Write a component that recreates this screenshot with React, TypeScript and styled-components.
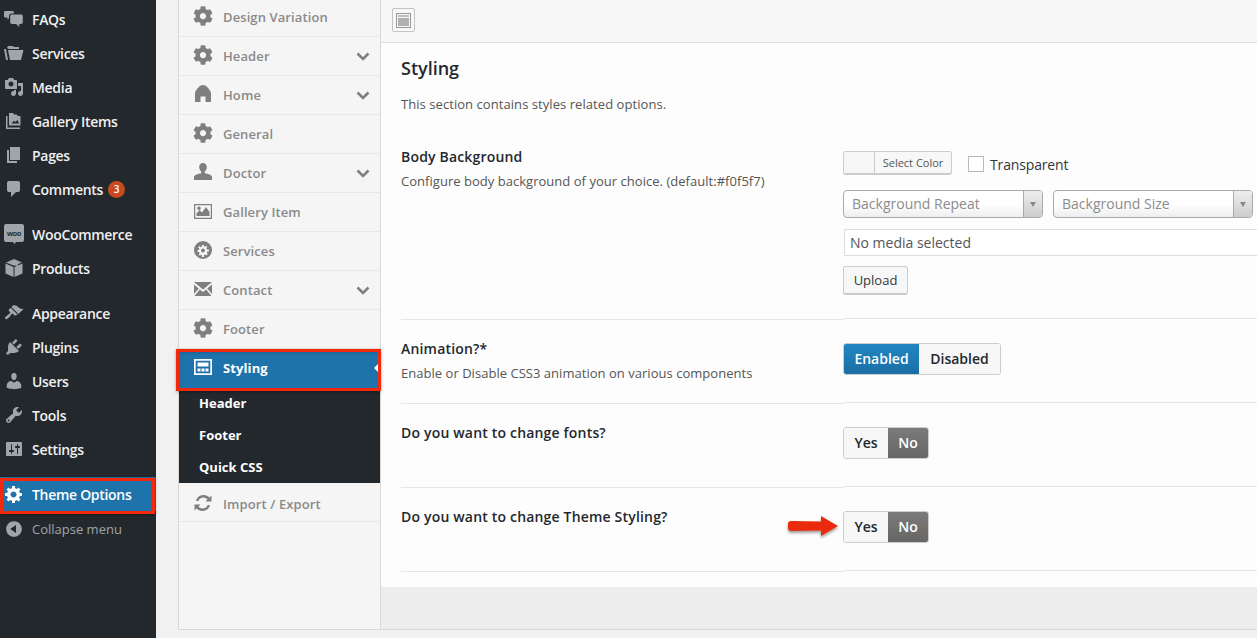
import * as React from 'react';
import styled, { createGlobalStyle } from 'styled-components';
import { FaCog } from 'react-icons/fa';

const GlobalStyle = createGlobalStyle`
    html, body {
        margin: 0;
        padding: 0;
        height: 638px;
        overflow: hidden;
        background: #f1f1f1;
        font-family: "Open Sans", "Liberation Sans", sans-serif;
    }
    * {
        box-sizing: border-box;
    }
`;

const Page = styled.div`
    display: flex;
    width: 1257px;
    height: 638px;
    overflow: hidden;
`;

/* ---- wordpress admin menu ---- */

const AdminMenu = styled.nav`
    width: 156px;
    flex: none;
    height: 638px;
    padding-top: 2px;
    background: #23282d;
`;

const MenuGroup = styled.div`
    margin-bottom: 11px;
`;

const MenuItem = styled.div<{ $active?: boolean }>`
    position: relative;
    display: flex;
    align-items: center;
    height: 34px;
    padding-left: 4px;
    gap: 8px;
    color: ${p => (p.$active ? '#fff' : '#f0f0f0')};
    background: ${p => (p.$active ? '#1e73aa' : 'transparent')};
    font-size: 14px;
    font-weight: 600;
    letter-spacing: -0.3px;

    svg {
        flex: none;
        width: 20px;
        height: 20px;
        fill: ${p => (p.$active ? '#fff' : '#a0a5aa')};
    }
`;

const Collapse = styled(MenuItem)`
    padding-top: 2px;
    color: #a0a5aa;
    font-size: 13px;
    font-weight: 400;
    letter-spacing: 0;
`;

const RedFrame = styled.span`
    position: absolute;
    border: 3px solid #f2290b;
    pointer-events: none;
    box-shadow: 0 1px 3px rgba(0, 0, 0, 0.35);
`;

const MenuFrame = styled(RedFrame)`
    left: 0;
    top: 1px;
    width: 155px;
    height: 36px;
`;

const Badge = styled.span`
    display: inline-flex;
    align-items: center;
    justify-content: center;
    width: 17px;
    height: 17px;
    margin-left: -3px;
    border-radius: 50%;
    background: #ca4a1f;
    color: #fff;
    font-size: 10px;
    font-weight: 600;
    letter-spacing: 0;
`;

/* ---- options panel ---- */

const Workspace = styled.div`
    flex: 1;
    min-width: 0;
    padding: 0 0 8px 22px;
`;

const Panel = styled.div`
    display: flex;
    height: 630px;
    border-left: 1px solid #d8d8d8;
    border-bottom: 1px solid #d8d8d8;
`;

const TabColumn = styled.div`
    width: 202px;
    flex: none;
    margin-top: -2px;
    background: #f5f5f5;
    border-right: 1px solid #d8d8d8;
`;

const Tab = styled.div<{ $active?: boolean }>`
    position: relative;
    display: flex;
    align-items: center;
    height: 39px;
    padding: ${p => (p.$active ? '0 0 2px 14px' : '0 0 0 14px')};
    gap: 10px;
    border-bottom: ${p => (p.$active ? 'none' : '1px solid #e8e8e8')};
    color: ${p => (p.$active ? '#fff' : '#8a8a8a')};
    background: ${p => (p.$active ? '#1e73aa' : 'transparent')};
    box-shadow: ${p => (p.$active ? 'inset 0 5px 4px -2px rgba(0, 0, 0, 0.22)' : 'none')};
    font-size: 13px;
    font-weight: ${p => (p.$active ? 700 : 600)};
    letter-spacing: 0.1px;

    & > svg:first-child {
        flex: none;
        width: 20px;
        height: 20px;
        margin-top: -2px;
        fill: ${p => (p.$active ? '#fff' : '#7f7f7f')};
    }
`;

const ImportTab = styled(Tab)`
    padding-top: 4px;
`;

const Chevron = styled.svg`
    position: absolute;
    right: 10px;
    top: 15px;
    width: 14px;
    height: 9px;
    fill: none;
    stroke: #7f7f7f;
    stroke-width: 2.6;
`;

const TabPointer = styled.span`
    position: absolute;
    right: 0;
    top: 13px;
    border-style: solid;
    border-width: 6px 6px 6px 0;
    border-color: transparent #fff transparent transparent;
`;

const TabFrame = styled(RedFrame)`
    left: -3px;
    top: 0;
    width: 205px;
    height: 42px;
`;

const SubTabs = styled.div`
    height: 95px;
    background: #23282d;
`;

const SubTab = styled.div`
    display: flex;
    align-items: center;
    height: 32px;
    padding: 0 0 2px 20px;
    color: #fff;
    font-size: 13px;
    font-weight: 700;
`;

const Content = styled.div`
    flex: 1;
    min-width: 0;
    display: flex;
    flex-direction: column;
`;

const TopBar = styled.div`
    display: flex;
    align-items: center;
    height: 43px;
    padding: 0 0 2px 11px;
    background: #f7f7f7;
    border-bottom: 1px solid #dedede;
`;

const LayoutButton = styled.div`
    display: flex;
    align-items: center;
    justify-content: center;
    width: 23px;
    height: 24px;
    background: #f8f8f8;
    border: 1px solid #c4c4c4;
    border-radius: 2px;

    svg {
        width: 15px;
        height: 15px;
    }
`;

const Sheet = styled.div`
    height: 544px;
    padding: 0 0 0 20px;
    background: #fdfdfd;
`;

const SectionTitle = styled.h2`
    margin: 0;
    padding-top: 14px;
    color: #23282d;
    font-size: 18px;
    line-height: 23px;
    font-weight: 600;
`;

const SectionText = styled.p`
    margin: 15px 0 0;
    color: #555;
    font-size: 13px;
    line-height: 18px;
    letter-spacing: 0.06px;
`;

const OptionRow = styled.div<{ $height: number }>`
    display: flex;
    height: ${p => p.$height}px;
`;

const OptionInfo = styled.div<{ $top: number }>`
    width: 442px;
    flex: none;
    padding-top: ${p => p.$top}px;
    border-bottom: 1px solid #e5e5e5;
`;

const OptionControl = styled.div<{ $top: number }>`
    position: relative;
    flex: 1;
    min-width: 0;
    padding-top: ${p => p.$top}px;
    margin-bottom: 1px;
    border-bottom: 1px solid #e5e5e5;
`;

const OptionLabel = styled.div`
    color: #23282d;
    font-size: 14px;
    line-height: 18px;
    font-weight: 600;
    letter-spacing: 0.18px;
`;

const OptionHint = styled.div`
    margin-top: 6px;
    color: #555;
    font-size: 13px;
    line-height: 18px;
    letter-spacing: 0.03px;
`;

const ControlLine = styled.div`
    display: flex;
    align-items: center;
`;

const ColorButton = styled.div`
    display: flex;
    width: 109px;
    height: 24px;
    border: 1px solid #ccc;
    border-bottom-width: 2px;
    border-radius: 3px;
    background: #f7f7f7;
    overflow: hidden;
`;

const Swatch = styled.span`
    width: 31px;
    background: #f6f6f6;
    border-right: 1px solid #ccc;
`;

const ColorCaption = styled.span`
    flex: 1;
    color: #555;
    font-size: 11px;
    line-height: 21px;
    text-align: center;
`;

const Checkbox = styled.span`
    width: 16px;
    height: 16px;
    margin-left: 16px;
    margin-top: 2px;
    border: 1px solid #b4b9be;
    background: #fff;
`;

const CheckText = styled.span`
    margin-left: 6px;
    margin-top: 3px;
    color: #32373c;
    font-size: 14px;
    letter-spacing: -0.15px;
`;

const SelectLine = styled(ControlLine)`
    gap: 10px;
    margin-top: 15px;
`;

const SelectBox = styled.div`
    display: flex;
    width: 200px;
    height: 28px;
    border: 1px solid #aaa;
    border-radius: 4px;
    background: linear-gradient(#fff 50%, #eee);
    overflow: hidden;
`;

const SelectText = styled.span`
    flex: 1;
    padding-left: 8px;
    color: #8c8c8c;
    font-size: 14px;
    line-height: 26px;
`;

const SelectArrow = styled.span`
    display: flex;
    align-items: center;
    justify-content: center;
    width: 19px;
    border-left: 1px solid #aaa;
    background: linear-gradient(#eee, #ccc);

    &::after {
        content: '';
        border-style: solid;
        border-width: 5px 3px 0;
        border-color: #888 transparent transparent;
    }
`;

const MediaInput = styled.div`
    width: 420px;
    height: 27px;
    margin: 11px 0 0 1px;
    padding-left: 5px;
    border: 1px solid #ddd;
    background: #fff;
    color: #555;
    font-size: 14px;
    line-height: 25px;
`;

const UploadButton = styled.div`
    width: 65px;
    height: 29px;
    margin-top: 10px;
    border: 1px solid #ccc;
    border-bottom-width: 2px;
    border-radius: 3px;
    background: #f7f7f7;
    color: #32373c;
    font-size: 13px;
    line-height: 26px;
    text-align: center;
`;

const SwitchGroup = styled.div`
    display: inline-flex;
    height: 32px;
    border: 1px solid #ccc;
    border-radius: 3px;
    overflow: hidden;
    vertical-align: top;
`;

const SwitchOption = styled.span<{ $width: number; $tone?: 'blue' | 'grey' }>`
    width: ${p => p.$width}px;
    color: ${p => (p.$tone ? '#fff' : '#23282d')};
    background: ${p =>
        p.$tone === 'blue'
            ? 'linear-gradient(#2186c2, #1b6ea6)'
            : p.$tone === 'grey'
            ? 'linear-gradient(#7b7b7b, #666)'
            : '#f7f7f7'};
    font-size: 14px;
    font-weight: 600;
    line-height: 30px;
    text-align: center;
`;

const Arrow = styled.svg`
    position: absolute;
    left: -57px;
    top: 27px;
    width: 54px;
    height: 28px;
    overflow: visible;
`;

const BottomBar = styled.div`
    flex: 1;
    background: #ededed;
`;

/* ---- icon drawings ---- */

const Dash = ({ d }: { d: string }) => (
    <svg viewBox="0 0 20 20">
        <path d={d} />
    </svg>
);

const COMMENT = 'M5 2h9q.82 0 1.41.59T16 4v7q0 .82-.59 1.41T14 13h-2l-5 5v-5H5q-.82 0-1.41-.59T3 11V4q0-.82.59-1.41T5 2z';
const MEDIA = 'M13 11V4c0-.55-.45-1-1-1h-1.67L9 1H5L3.67 3H2c-.55 0-1 .45-1 1v7c0 .55.45 1 1 1h10c.55 0 1-.45 1-1zM7 4.5c1.38 0 2.5 1.12 2.5 2.5S8.38 9.5 7 9.5 4.5 8.38 4.5 7 5.62 4.5 7 4.5zM14 6h5v10.5c0 1.38-1.12 2.5-2.5 2.5S14 17.88 14 16.5s1.12-2.5 2.5-2.5c.17 0 .34.02.5.05V9h-3V6zm-4 8.05V13h2v3.5c0 1.38-1.12 2.5-2.5 2.5S7 17.88 7 16.5 8.12 14 9.5 14c.17 0 .34.02.5.05z';
const PAGES = 'M6 15V2h10v13H6zm-1 1h8v2H3V5h2v11z';
const APPEARANCE = 'M14.48 11.06L7.41 3.99l1.5-1.5c.5-.56 2.3-.47 3.51.32 1.21.8 1.43 1.28 2.91 2.1 1.18.64 2.45 1.26 4.45.85zm-.71.71L6.7 4.7 4.93 6.47c-.39.39-.39 1.02 0 1.41l1.06 1.06c.39.39.39 1.03 0 1.42-.6.6-1.43 1.11-2.21 1.69-.35.26-.7.53-1.01.84C1.43 13.23.4 14.89 1.3 15.79c.91.9 2.57-.13 3.91-1.47.31-.31.58-.66.85-1.01.57-.78 1.08-1.61 1.69-2.21.39-.39 1.02-.39 1.41 0l1.06 1.06c.39.39 1.02.39 1.41 0z';
const PLUGINS = 'M13.11 4.36L9.87 7.6 8 5.73l3.24-3.24c.35-.34 1.05-.2 1.56.32.52.51.66 1.21.31 1.55zm-8 1.77l.91-1.12 9.01 9.01-1.19.84c-.71.71-2.63 1.16-3.82 1.16H6.14L4.9 17.26c-.59.59-1.54.59-2.12 0-.59-.58-.59-1.53 0-2.12l1.24-1.24v-3.88c0-1.13.4-3.19 1.09-3.89zm7.26 3.97l3.24-3.24c.34-.35 1.04-.21 1.55.31.52.51.66 1.21.31 1.55l-3.24 3.25z';
const USERS = 'M10 9.25c-2.27 0-2.73-3.44-2.73-3.44C7 4.02 7.82 2 9.97 2c2.16 0 2.98 2.02 2.71 3.81 0 0-.41 3.44-2.68 3.44zm0 2.57L12.72 10c2.39 0 4.52 2.33 4.52 4.53v2.49s-3.65 1.13-7.24 1.13c-3.65 0-7.24-1.13-7.24-1.13v-2.49c0-2.25 1.94-4.48 4.47-4.48z';
const TOOLS = 'M16.68 9.77c-1.34 1.34-3.3 1.67-4.95.99l-5.41 6.52c-.99.99-2.59.99-3.58 0s-.99-2.59 0-3.57l6.52-5.42c-.68-1.65-.35-3.61.99-4.95 1.28-1.28 3.12-1.62 4.72-1.06l-2.89 2.89 2.82 2.82 2.86-2.87c.53 1.58.18 3.39-1.08 4.65zM3.81 16.21c.4.39 1.04.39 1.43 0 .4-.4.4-1.04 0-1.43-.39-.4-1.03-.4-1.43 0-.39.39-.39 1.03 0 1.43z';
const SETTINGS = 'M18 16V4c0-.55-.45-1-1-1H3c-.55 0-1 .45-1 1v12c0 .55.45 1 1 1h14c.55 0 1-.45 1-1zM8 11h1c.55 0 1 .45 1 1s-.45 1-1 1H8v1.5c0 .28-.22.5-.5.5s-.5-.22-.5-.5V13H6c-.55 0-1-.45-1-1s.45-1 1-1h1V5.5c0-.28.22-.5.5-.5s.5.22.5.5V11zm5-2h-1c-.55 0-1-.45-1-1s.45-1 1-1h1V5.5c0-.28.22-.5.5-.5s.5.22.5.5V7h1c.55 0 1 .45 1 1s-.45 1-1 1h-1v5.5c0 .28-.22.5-.5.5s-.5-.22-.5-.5V9z';
const GENERIC = 'M18 12h-2.18c-.17.7-.44 1.35-.81 1.93l1.54 1.54-2.1 2.1-1.54-1.54c-.58.36-1.23.63-1.91.79V19H8v-2.18c-.68-.16-1.33-.43-1.91-.79l-1.54 1.54-2.12-2.12 1.54-1.54c-.36-.58-.63-1.23-.79-1.91H1V9.03h2.17c.16-.7.44-1.35.8-1.94L2.43 5.55l2.1-2.1 1.54 1.54c.58-.37 1.24-.64 1.93-.81V2h3v2.18c.68.16 1.33.43 1.91.79l1.54-1.54 2.12 2.12-1.54 1.54c.36.59.64 1.24.8 1.94H18V12zm-8.5 1.5c1.66 0 3-1.34 3-3s-1.34-3-3-3-3 1.34-3 3 1.34 3 3 3z';
const COLLAPSE = 'M10 2.16c4.33 0 7.84 3.51 7.84 7.84s-3.51 7.84-7.84 7.84S2.16 14.33 2.16 10 5.71 2.16 10 2.16zm2 11.72V6.12L6.18 9.97z';
const FOLDER = 'M3 5l1-2h5l1 1h5v2H5L3 5zM0 6h2l2 11H2L0 6zM4 7h15.5L17 17H6L4 7z';
const GALLERY = 'M2 5h1.500v11.500H16V18H2V5zM5 2h4l1 1.500h2.500L14 5h2.500v9.500H5V2zm2.500 10.500h7.500l-1.500-3.500-2.200 2-1.300-1.200-2.500 2.700z';
const PRODUCTS = 'M10 1l8 3.4-8 3.4-8-3.4L10 1zM1.500 5.600l8 3.400v10l-8-3.600V5.600zm17 0v9.800l-8 3.600V9l8-3.400zM6 3l8 3.400v2L6 5V3z';
const HOME = 'M10 1c2 0 3.400 1.200 4.600 2.500C16 5.100 18 7.100 18 9.500V18h-5.500v-5.500h-5V18H2V9.500c0-2.400 2-4.400 3.400-6C6.600 2.200 8 1 10 1z';
const PERSON = 'M10 1c2.500 0 3.800 1.800 3.800 4 0 2-1 3.600-2 4.600v1.600c2.800.6 7 1.400 7.200 3.800V18H1v-3c.2-2.400 4.400-3.200 7.200-3.800V9.600c-1-1-2-2.600-2-4.600 0-2.200 1.300-4 3.800-4z';
const PICTURE = 'M1 3h18v15H1V3zm1.200 1.200v12.600h15.600V4.200H2.200zM3.500 15v-2.500l3-3.500 2.500 2.500 4-5.500 3.500 5V15h-13zM6 5.500a1.800 1.800 0 110 3.600 1.800 1.800 0 010-3.600z';
const BADGEGEAR = 'M10 1a9 9 0 110 18 9 9 0 010-18zm-1 4v1.600l-1.400.6-1.100-1.100-1.400 1.400 1.100 1.100L6 10H4.500v2H6l.6 1.400-1 1 1.400 1.400 1-1 1 .5v1.700h2v-2l1.400-.6 1 1 1.400-1.400-1-1 .6-1.500h1.500v-2H14l-.6-1.400 1-1-1.400-1.400-1 1L11 6.600V5H9zm1 3.500a2 2 0 110 4 2 2 0 010-4z';
const ENVELOPE = 'M1 3h18L10 10.500 1 3zm0 2.500l4.800 4L1 15V5.500zm18 0V15l-4.800-5.500 4.800-4zM6.800 10.600L10 13l3.200-2.400L18.500 17h-17l5.300-6.400z';
const REFRESH = 'M3 8C4 4 7 2 10.500 2c2.500 0 4.500 1 6 2.500L18.500 2.500v6h-6l2-2C13.500 5.300 12 4.500 10.500 4.500 8 4.500 6 6 5.400 8H3zm14 4c-1 4-4 6-7.500 6-2.500 0-4.500-1-6-2.500l-2 2v-6h6l-2 2c1 1.200 2.500 2 4 2 2.500 0 4.500-1.500 5.100-3.500H17z';
const STYLING = 'M1 2h18v16H1V2zm1.700 1.700v12.600h14.600V3.700H2.700zM4.500 5.500h11v4h-11v-4zm0 6h3v3h-3v-3zm4 0h3v3h-3v-3zm4 0h3v3h-3v-3z';

const FaqIcon = () => (
    <svg viewBox="0 0 20 20">
        <path d="M1.500 2h7c.8 0 1.300.5 1.300 1.300v1.200H7.500C6 4.500 5 5.500 5 7v2.200L3.500 10.500V8.500h-2C.7 8.500 0 8 0 7.200V3.300C0 2.500.7 2 1.500 2z" />
        <path d="M8 5.500h9c1 0 1.800.7 1.800 1.700v6c0 1-.8 1.700-1.800 1.700h-1.800V18l-3-3.100H8c-1 0-1.800-.7-1.800-1.700v-6c0-1 .8-1.700 1.800-1.700z" />
    </svg>
);

const WooIcon = () => (
    <svg viewBox="0 0 20 20">
        <path d="M2 0h16c1 0 2 1 2 2v14c0 1-1 2-2 2h-6l-1.500 2L9 18H2c-1 0-2-1-2-2V2C0 1 1 0 2 0z" />
        <text x="10" y="11.500" fontSize="7.500" fontFamily="Liberation Sans" fontWeight="700" textAnchor="middle" style={{ fill: '#23282d' }}>
            woo
        </text>
    </svg>
);

const LayoutIcon = () => (
    <svg viewBox="0 0 15 15">
        <rect x="0.500" y="0.500" width="14" height="14" fill="none" stroke="#999" />
        <rect x="2" y="2" width="11" height="2" fill="#bdbdbd" />
        <rect x="2" y="5" width="11" height="8" fill="#b0b0b0" />
    </svg>
);

const ChevronDown = () => (
    <Chevron viewBox="0 0 14 9">
        <path d="M1.500 1.500L7 7l5.500-5.500" />
    </Chevron>
);

interface INavEntry {
    label: string;
    icon: JSX.Element;
    count?: number;
}

const firstGroup: INavEntry[] = [
    { label: 'FAQs', icon: <FaqIcon /> },
    { label: 'Services', icon: <Dash d={FOLDER} /> },
    { label: 'Media', icon: <Dash d={MEDIA} /> },
    { label: 'Gallery Items', icon: <Dash d={GALLERY} /> },
    { label: 'Pages', icon: <Dash d={PAGES} /> },
    { label: 'Comments', icon: <Dash d={COMMENT} />, count: 3 }
];

const secondGroup: INavEntry[] = [
    { label: 'WooCommerce', icon: <WooIcon /> },
    { label: 'Products', icon: <Dash d={PRODUCTS} /> }
];

const thirdGroup: INavEntry[] = [
    { label: 'Appearance', icon: <Dash d={APPEARANCE} /> },
    { label: 'Plugins', icon: <Dash d={PLUGINS} /> },
    { label: 'Users', icon: <Dash d={USERS} /> },
    { label: 'Tools', icon: <Dash d={TOOLS} /> },
    { label: 'Settings', icon: <Dash d={SETTINGS} /> }
];

const tabsBefore = [
    { label: 'Design Variation', icon: <FaCog /> },
    { label: 'Header', icon: <FaCog />, more: true },
    { label: 'Home', icon: <Dash d={HOME} />, more: true },
    { label: 'General', icon: <FaCog /> },
    { label: 'Doctor', icon: <Dash d={PERSON} />, more: true },
    { label: 'Gallery Item', icon: <Dash d={PICTURE} /> },
    { label: 'Services', icon: <Dash d={BADGEGEAR} /> },
    { label: 'Contact', icon: <Dash d={ENVELOPE} />, more: true },
    { label: 'Footer', icon: <FaCog /> }
];

const renderNav = (entries: INavEntry[]) => (
    <MenuGroup>
        {entries.map(entry => (
            <MenuItem key={entry.label}>
                {entry.icon}
                <span>{entry.label}</span>
                {entry.count ? <Badge>{entry.count}</Badge> : null}
            </MenuItem>
        ))}
    </MenuGroup>
);

const YesNo = () => (
    <SwitchGroup>
        <SwitchOption $width={44}>Yes</SwitchOption>
        <SwitchOption $width={40} $tone="grey">No</SwitchOption>
    </SwitchGroup>
);

export default function App() {
    return (
        <Page>
            <GlobalStyle />
            <AdminMenu>
                {renderNav(firstGroup)}
                {renderNav(secondGroup)}
                {renderNav(thirdGroup)}
                <MenuItem $active>
                    <Dash d={GENERIC} />
                    <span>Theme Options</span>
                    <MenuFrame />
                </MenuItem>
                <Collapse>
                    <Dash d={COLLAPSE} />
                    <span>Collapse menu</span>
                </Collapse>
            </AdminMenu>
            <Workspace>
                <Panel>
                    <TabColumn>
                        {tabsBefore.map(tab => (
                            <Tab key={tab.label}>
                                {tab.icon}
                                <span>{tab.label}</span>
                                {tab.more ? <ChevronDown /> : null}
                            </Tab>
                        ))}
                        <Tab $active>
                            <Dash d={STYLING} />
                            <span>Styling</span>
                            <TabPointer />
                            <TabFrame />
                        </Tab>
                        <SubTabs>
                            <SubTab>Header</SubTab>
                            <SubTab>Footer</SubTab>
                            <SubTab>Quick CSS</SubTab>
                        </SubTabs>
                        <ImportTab>
                            <Dash d={REFRESH} />
                            <span>Import / Export</span>
                        </ImportTab>
                    </TabColumn>
                    <Content>
                        <TopBar>
                            <LayoutButton>
                                <LayoutIcon />
                            </LayoutButton>
                        </TopBar>
                        <Sheet>
                            <SectionTitle>Styling</SectionTitle>
                            <SectionText>This section contains styles related options.</SectionText>
                            <OptionRow $height={207}>
                                <OptionInfo $top={35}>
                                    <OptionLabel>Body Background</OptionLabel>
                                    <OptionHint>Configure body background of your choice. (default:#f0f5f7)</OptionHint>
                                </OptionInfo>
                                <OptionControl $top={38}>
                                    <ControlLine>
                                        <ColorButton>
                                            <Swatch />
                                            <ColorCaption>Select Color</ColorCaption>
                                        </ColorButton>
                                        <Checkbox />
                                        <CheckText>Transparent</CheckText>
                                    </ControlLine>
                                    <SelectLine>
                                        <SelectBox>
                                            <SelectText>Background Repeat</SelectText>
                                            <SelectArrow />
                                        </SelectBox>
                                        <SelectBox>
                                            <SelectText>Background Size</SelectText>
                                            <SelectArrow />
                                        </SelectBox>
                                    </SelectLine>
                                    <MediaInput>No media selected</MediaInput>
                                    <UploadButton>Upload</UploadButton>
                                </OptionControl>
                            </OptionRow>
                            <OptionRow $height={84}>
                                <OptionInfo $top={20}>
                                    <OptionLabel>Animation?*</OptionLabel>
                                    <OptionHint>Enable or Disable CSS3 animation on various components</OptionHint>
                                </OptionInfo>
                                <OptionControl $top={23}>
                                    <SwitchGroup>
                                        <SwitchOption $width={75} $tone="blue">Enabled</SwitchOption>
                                        <SwitchOption $width={81}>Disabled</SwitchOption>
                                    </SwitchGroup>
                                </OptionControl>
                            </OptionRow>
                            <OptionRow $height={84}>
                                <OptionInfo $top={20}>
                                    <OptionLabel>Do you want to change fonts?</OptionLabel>
                                </OptionInfo>
                                <OptionControl $top={23}>
                                    <YesNo />
                                </OptionControl>
                            </OptionRow>
                            <OptionRow $height={84}>
                                <OptionInfo $top={20}>
                                    <OptionLabel>Do you want to change Theme Styling?</OptionLabel>
                                </OptionInfo>
                                <OptionControl $top={23}>
                                    <YesNo />
                                    <Arrow viewBox="0 0 54 28">
                                        <defs>
                                            <filter id="arrowShadow" x="-20%" y="-30%" width="140%" height="170%">
                                                <feDropShadow dx="0" dy="2" stdDeviation="1.500" floodColor="#000" floodOpacity="0.4" />
                                            </filter>
                                        </defs>
                                        <path
                                            d="M2 9c0-2 1-3 3-3l30 .5V1l17 10-17 10v-5.500L5 16c-2 0-3-1-3-3.500z"
                                            fill="#e92a0c"
                                            filter="url(#arrowShadow)"
                                        />
                                    </Arrow>
                                </OptionControl>
                            </OptionRow>
                        </Sheet>
                        <BottomBar />
                    </Content>
                </Panel>
            </Workspace>
        </Page>
    );
}
